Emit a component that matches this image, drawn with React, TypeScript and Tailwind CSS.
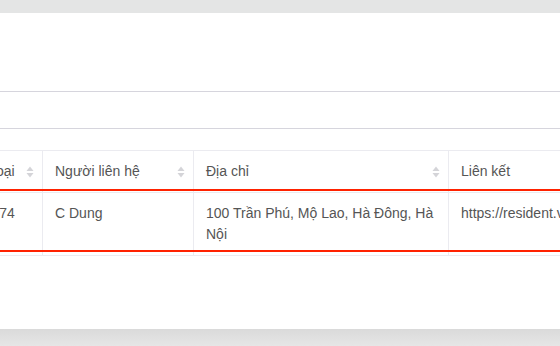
const font = { fontFamily: '"Liberation Sans", Arial, sans-serif' };

function SortIcon() {
  return (
    <svg width="8" height="12" viewBox="0 0 8 12" className="shrink-0">
      <path d="M4 0.5 L7.5 5 L0.5 5 Z" fill="#d4d4d8" />
      <path d="M0.5 7 L7.5 7 L4 11.5 Z" fill="#d4d4d8" />
    </svg>
  );
}

const columns = [
  { title: 'Số điện thoại', width: 'w-[122px]', sort: true },
  { title: 'Người liên hệ', width: 'w-[151px]', sort: true },
  { title: 'Địa chỉ', width: 'w-[255px]', sort: true },
  { title: 'Liên kết', width: 'w-[320px]', sort: true },
];

const row = [
  '0912.345674',
  'C Dung',
  '100 Trần Phú, Mộ Lao, Hà Đông, Hà Nội',
  'https://resident.vn/lien-ket/c-dung',
];

export default function App() {
  return (
    <div className="w-[560px] h-[346px] overflow-hidden flex flex-col bg-white" style={font}>
      <div className="h-[13px] bg-[#e4e5e5] shrink-0" />

      <div className="h-[316px] shrink-0 bg-white flex flex-col">
        <div className="h-[79px] border-b border-[#d6d5dd]" />
        <div className="h-[37px] border-b border-[#d6d5dd]" />
        <div className="h-[21px]" />

        <div className="overflow-hidden">
          <div className="ml-[-79px] w-[900px] border-t border-[#ebebf0] text-[14px] leading-[21px] text-[#555555]">
            <div className="flex border-b border-[#ebebf0]">
              {columns.map((c, i) => (
                <div
                  key={i}
                  className={`${c.width} shrink-0 flex items-center justify-between pl-3 pr-2 py-[10px] border-r border-[#ebebf0]`}
                >
                  <span className="whitespace-nowrap">{c.title}</span>
                  {c.sort && i < 3 && <SortIcon />}
                </div>
              ))}
            </div>

            <div className="relative flex border-b border-[#ebebf0]">
              {row.map((v, i) => (
                <div
                  key={i}
                  className={`${columns[i].width} shrink-0 px-3 py-[10px] h-[62px] border-r border-[#ebebf0] ${
                    i === 3 ? 'whitespace-nowrap' : ''
                  }`}
                >
                  {v}
                </div>
              ))}
              <div className="absolute left-0 right-0 top-[-4px] h-[63px] border-y-2 border-[#ff2200] pointer-events-none" />
            </div>
          </div>
        </div>
      </div>

      <div className="h-[17px] shrink-0 bg-gradient-to-b from-[#dadada] to-[#e6e6e6]" />
    </div>
  );
}
